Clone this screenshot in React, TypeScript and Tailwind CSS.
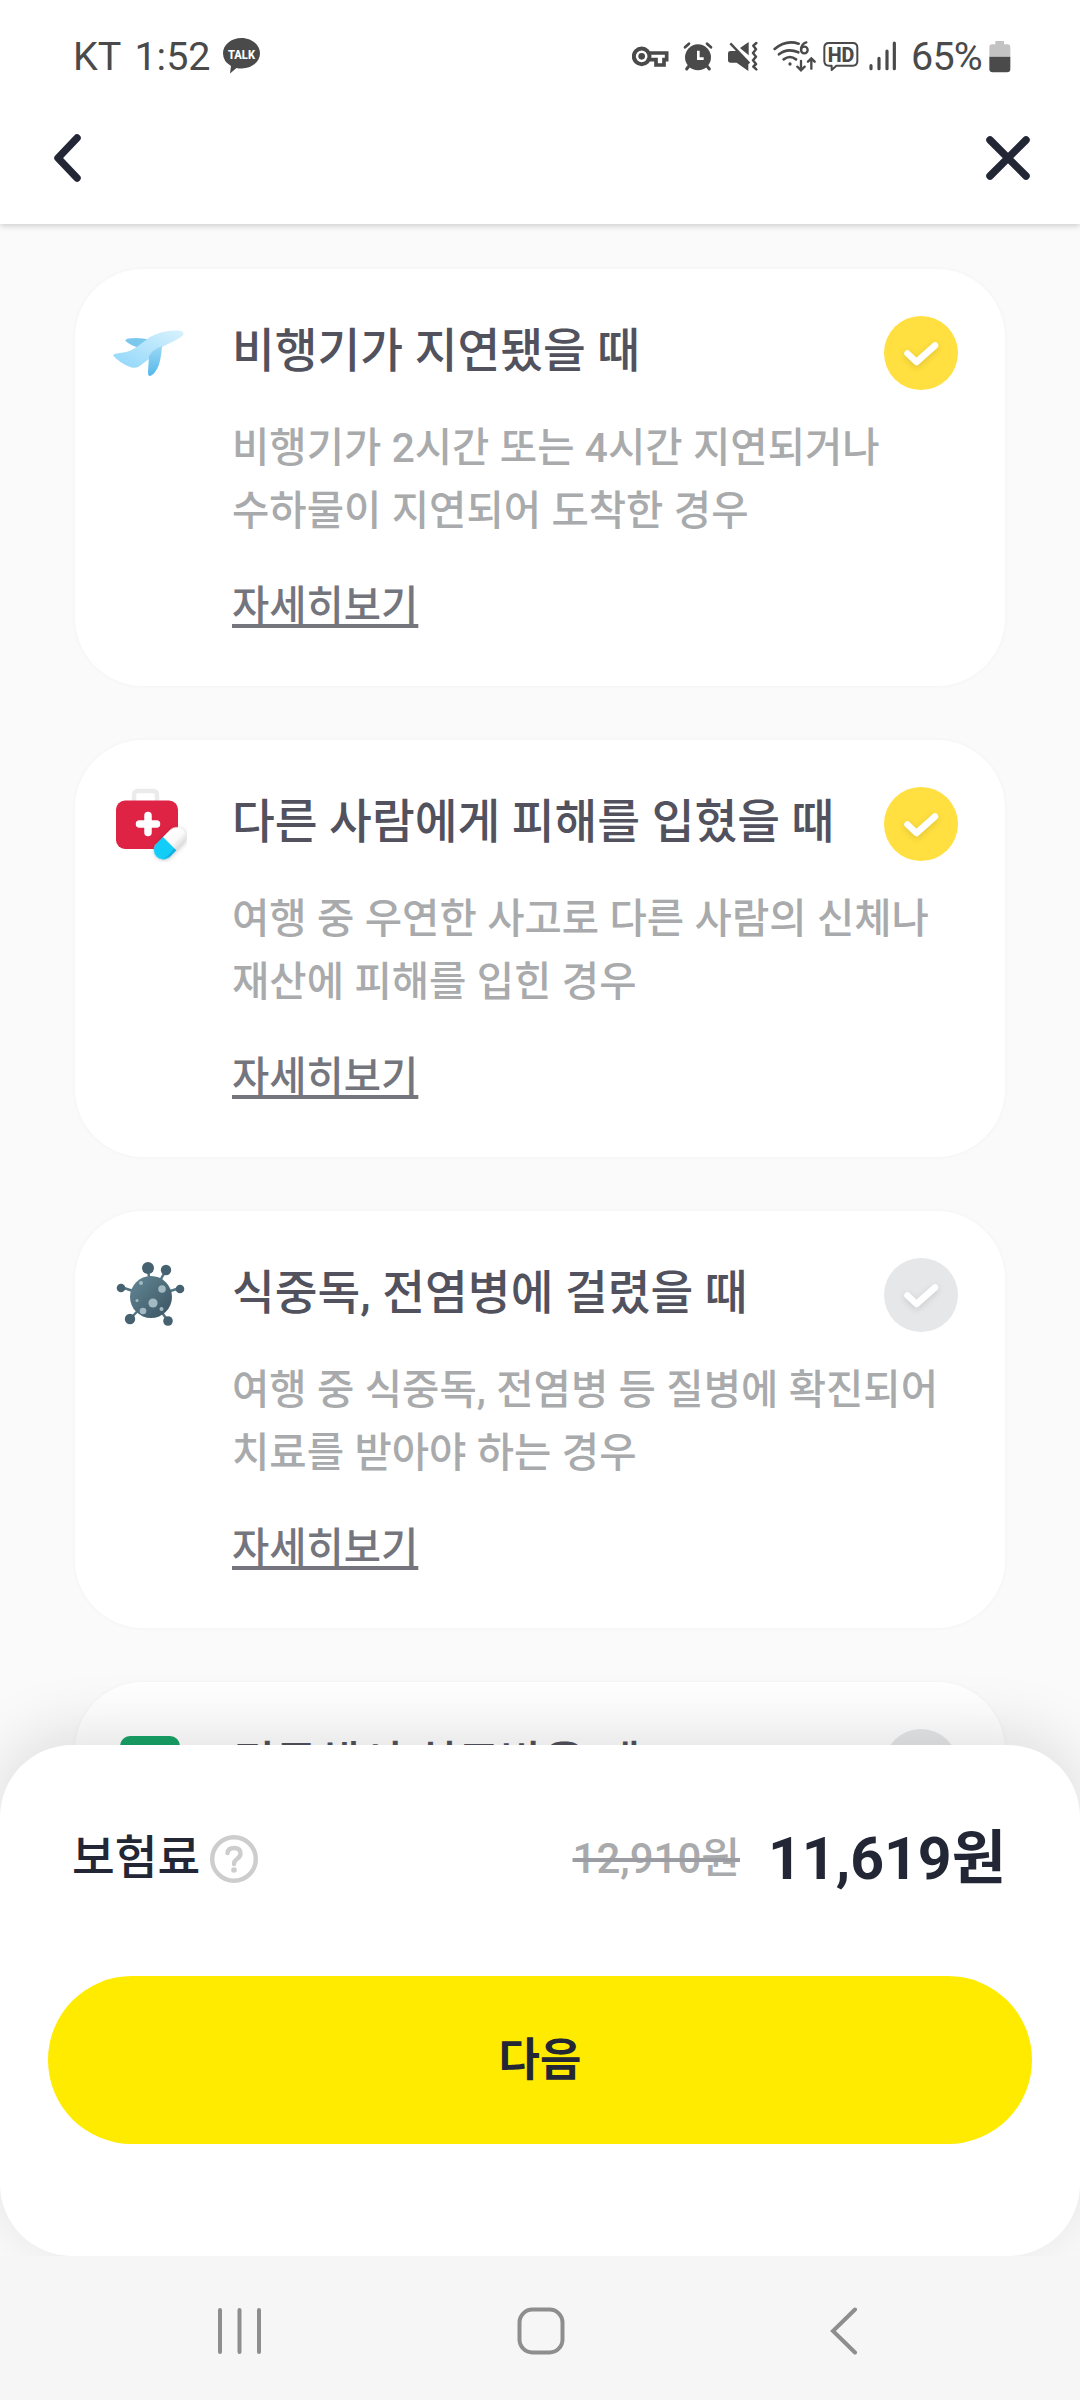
import type { ReactNode } from "react";

type Coverage = {
    id: number;
    icon: ReactNode;
    title: string;
    description: string[];
    checked: boolean;
}

const KeyIcon = () => (
    <svg width="37" height="32" viewBox="36 44 111 96" fill="none" stroke="#4a4a4a">
        <path d="M88 83H140V103H132V119H108V103H88" strokeWidth="11" />
        <circle cx="65" cy="93" r="23.500" strokeWidth="12" />
        <circle cx="65" cy="93" r="10" fill="#4a4a4a" stroke="none" />
    </svg>
)

const AlarmIcon = () => (
    <svg width="30" height="32" viewBox="188 44 90 96" fill="none" stroke="#4a4a4a" strokeLinecap="round">
        <circle cx="233" cy="96" r="39" fill="#4a4a4a" stroke="none" />
        <path d="M194 66L206 55M272 66L260 55" strokeWidth="8" />
        <path d="M206 122L199 131M260 122L267 131" strokeWidth="9" />
        <path d="M234 76V100H250" stroke="#fff" strokeWidth="8" strokeLinecap="butt" />
    </svg>
)

const MuteIcon = () => (
    <svg width="30" height="32" viewBox="324 44 90 96">
        <path d="M324 84Q324 77 331 77H352L385 108V137L350 112H332Q324 112 324 104Z" fill="#4a4a4a" />
        <path d="M360 68L386 50V90Z" fill="#4a4a4a" />
        <path d="M331 54L388 114" stroke="#4a4a4a" strokeWidth="7" />
        <path d="M409 53L400 61L408 72L399 83L408 94L399 105L408 116L400 124L409 132" fill="none" stroke="#4a4a4a" strokeWidth="7.500" strokeLinecap="round" strokeLinejoin="round" />
    </svg>
)

const WifiIcon = () => (
    <svg width="43" height="32" viewBox="457 44 129 96" fill="none" stroke="#4a4a4a" strokeWidth="8" strokeLinecap="round">
        <path d="M462 71Q496 42 534 55M475 87Q500 67 533 81M489 102Q508 88 526 102" />
        <circle cx="508" cy="116" r="5" fill="#4a4a4a" stroke="none" />
        <circle cx="551" cy="74" r="10" strokeWidth="7" />
        <path d="M557 51Q542 55 541 73" strokeWidth="7" />
        <path d="M541 107V134M530 124L541 135L552 124M572 130V100M562 109L572 99L582 109" strokeWidth="7" />
    </svg>
)

const HdIcon = () => (
    <svg width="36" height="32" viewBox="607 44 108 96">
        <path d="M625 53H696Q710 53 710 67V107Q710 121 696 121H647L633 134V121H625Q611 121 611 107V67Q611 53 625 53Z" fill="none" stroke="#4a4a4a" strokeWidth="6" strokeLinejoin="round" />
        <text x="661" y="109" textAnchor="middle" fontSize="62" fontWeight="800" fill="#4a4a4a" textLength="80" lengthAdjust="spacingAndGlyphs" fontFamily="Roboto, sans-serif">HD</text>
    </svg>
)

const SignalIcon = () => (
    <svg width="28" height="32" viewBox="746 44 84 96" stroke="#4a4a4a" strokeWidth="9.500" strokeLinecap="round">
        <path d="M752 121V130M776 99V130M800 77V130M822 53V130" />
    </svg>
)

const BatteryIcon = () => (
    <svg width="22" height="33" viewBox="1106 43 66 99">
        <path d="M1125 46H1151V56H1162Q1170 56 1170 66V93H1107V66Q1107 56 1115 56H1125Z" fill="#c3c3c3" />
        <path d="M1107 93H1170V130Q1170 140 1160 140H1117Q1107 140 1107 130Z" fill="#4a4a4a" />
    </svg>
)

const TalkIcon = () => (
    <svg width="37" height="36" viewBox="0 0 37 36">
        <path d="M18.500 0C28.700 0 37 6.800 37 15.300S28.700 30.500 18.500 30.500Q15.500 30.500 13.500 30L7 35.500L8 28Q0 23.500 0 15.300C0 6.800 8.300 0 18.500 0Z" fill="#4a4a4a" />
        <text x="18.500" y="20.500" textAnchor="middle" fontSize="13.500" fontWeight="800" fill="#fff" textLength="27" lengthAdjust="spacingAndGlyphs" fontFamily="Roboto, sans-serif">TALK</text>
    </svg>
)

const PlaneIcon = () => (
    <svg width="72" height="72" viewBox="0 0 72 72">
        <defs>
            <linearGradient id="plane-body" x1="1" y1="0" x2="0" y2="1">
                <stop offset="0" stopColor="#d8f2fd" />
                <stop offset="1" stopColor="#8fd6fa" />
            </linearGradient>
            <linearGradient id="plane-wing" x1="0" y1="0" x2="0" y2="1">
                <stop offset="0" stopColor="#9bd8f5" />
                <stop offset="1" stopColor="#55b8ea" />
            </linearGradient>
        </defs>
        <path d="M12.500 24Q12 22 16 21.500Q25 20 37 22.500L27 31Q18 29 12.500 24Z" fill="#7cc8ed" />
        <path d="M0.500 39Q0 36.500 4 36.500L13 35Q18 34 25 29L37 20Q50 12.500 65 13.500Q71.500 14 70.500 17Q69.500 20 61 24L48 30.500L36 42L26 49.500Q21 52 16 49.500Q7 46 0.500 39Z" fill="url(#plane-body)" />
        <path d="M49 29Q48 45 44 52Q40 59 36.500 59Q35 59 35 55L36 39Q39 33 49 29Z" fill="url(#plane-wing)" />
    </svg>
)

const MedkitIcon = () => (
    <svg width="74" height="74" viewBox="0 0 74 74">
        <defs>
            <linearGradient id="pill-cap" x1="0" y1="0" x2="0" y2="1">
                <stop offset="0" stopColor="#fff" />
                <stop offset="0.6" stopColor="#fafafa" />
                <stop offset="1" stopColor="#dcdcdc" />
            </linearGradient>
        </defs>
        <path d="M21 14V7Q21 3 25 3H40Q44 3 44 7V14" fill="none" stroke="#ebebeb" strokeWidth="4.500" />
        <rect x="3" y="12.500" width="62" height="48.500" rx="9" fill="#de2344" />
        <path d="M35 27.500V44.500M26.500 36H43.500" stroke="#fff" strokeWidth="7.500" strokeLinecap="round" />
        <g transform="rotate(-45 57 56)" className="drop-shadow-[0_1px_2px_rgba(0,0,0,0.2)]">
            <rect x="38.500" y="46" width="38" height="19" rx="9.500" fill="url(#pill-cap)" />
            <path d="M57 46H48A9.500 9.500 0 0 0 48 65H57Z" fill="#12cdf8" />
            <path d="M42 62Q48 63.500 57 62V65H48Q44.500 64.500 42 62Z" fill="#17aee0" />
        </g>
    </svg>
)

const VirusIcon = () => (
    <svg width="72" height="72" viewBox="0 0 72 72">
        <defs>
            <linearGradient id="virus-body" x1="0" y1="0" x2="1" y2="1">
                <stop offset="0" stopColor="#648896" />
                <stop offset="1" stopColor="#3a5361" />
            </linearGradient>
        </defs>
        <path d="M38 38L35 9M38 38L53 11M38 38L8 28M38 38L67 29M38 38L17 60M38 38L55 62" stroke="#527583" strokeWidth="2.500" />
        <circle cx="38" cy="38" r="21" fill="url(#virus-body)" />
        <g fill="#46616f">
            <circle cx="35" cy="9" r="6" />
            <circle cx="53" cy="11" r="5.200" />
            <circle cx="8" cy="29" r="4.300" />
            <circle cx="67" cy="30" r="4.300" />
            <circle cx="17" cy="60" r="5.200" />
            <circle cx="55" cy="62" r="4.800" />
        </g>
        <g fill="#a3bac3">
            <circle cx="49" cy="30" r="3.800" />
            <circle cx="40" cy="44" r="4.600" />
            <circle cx="30" cy="52" r="3.300" />
            <circle cx="28" cy="24" r="2" />
            <circle cx="24" cy="41.500" r="1.500" />
            <circle cx="48.500" cy="50" r="2" />
        </g>
    </svg>
)

const HospitalIcon = () => (
    <svg width="72" height="72" viewBox="0 0 72 72">
        <rect x="7" y="6" width="60" height="61" rx="10" fill="#18a368" />
        <path d="M37 22V50M23 36H51" stroke="#fff" strokeWidth="8" strokeLinecap="round" />
    </svg>
)

const coverages: Coverage[] = [
    {
        id: 1,
        icon: <PlaneIcon />,
        title: "비행기가 지연됐을 때",
        description: ["비행기가 2시간 또는 4시간 지연되거나", "수하물이 지연되어 도착한 경우"],
        checked: true,
    },
    {
        id: 2,
        icon: <MedkitIcon />,
        title: "다른 사람에게 피해를 입혔을 때",
        description: ["여행 중 우연한 사고로 다른 사람의 신체나", "재산에 피해를 입힌 경우"],
        checked: true,
    },
    {
        id: 3,
        icon: <VirusIcon />,
        title: "식중독, 전염병에 걸렸을 때",
        description: ["여행 중 식중독, 전염병 등 질병에 확진되어", "치료를 받아야 하는 경우"],
        checked: false,
    },
    {
        id: 4,
        icon: <HospitalIcon />,
        title: "귀국해서 치료받을 때",
        description: [],
        checked: false,
    },
];

const CheckBadge = ({ checked }: { checked: boolean }) => (
    <svg width="74" height="74" viewBox="0 0 74 74" className={checked ? "text-[#ffe040]" : "text-[#e6e7e9]"}>
        <circle cx="37" cy="37" r="37" fill="currentColor" />
        <path d="M23.500 37.500L32.500 46L51 29.500" fill="none" stroke="#fff" strokeWidth="6.500" strokeLinecap="round" strokeLinejoin="round" className="drop-shadow-[0_2px_3px_rgba(0,0,0,0.12)]" />
    </svg>
)

const CoverageCard = ({ coverage }: { coverage: Coverage }) => {
    const { icon, title, description, checked } = coverage;

    return (
        <li className="flex h-[417px] shrink-0 rounded-[68px] bg-white pl-[38px] pr-[47px] pt-[47px] shadow-[0_0_4px_rgba(0,0,0,0.04)]">
            <div className="w-[119px] shrink-0 pt-px">{icon}</div>
            <div className="min-w-0 flex-1 whitespace-nowrap">
                <div className="flex h-[74px] justify-between">
                    <h3 className="pt-0.5 text-[46.5px] leading-[66px] font-medium text-[#52525e]">{title}</h3>
                    <CheckBadge checked={checked} />
                </div>
                <p className="mt-[27px] text-[40.6px] leading-[63px] font-medium text-[#a9aaac] [word-spacing:0.3px]">
                    {description.map((line) => <span key={line} className="block">{line}</span>)}
                </p>
                <a className="mt-8 inline-block text-[40.5px] leading-[63px] font-medium text-[#75757d] underline decoration-[4px] underline-offset-[4px]">자세히보기</a>
            </div>
        </li>
    )
}

const StatusBar = () => (
    <div className="flex h-28 items-center justify-between pl-[73px] pr-[69px] text-[39.5px] text-[#4a4a4a]">
        <div className="flex items-center">
            <span className="w-[150px] pt-0.5 whitespace-nowrap [word-spacing:4px]">KT 1:52</span>
            <TalkIcon />
        </div>
        <div className="flex items-center">
            <KeyIcon />
            <div className="ml-3.5 flex"><AlarmIcon /></div>
            <div className="ml-[15px] flex"><MuteIcon /></div>
            <div className="ml-[15px] flex"><WifiIcon /></div>
            <div className="ml-[7px] flex"><HdIcon /></div>
            <div className="ml-2.5 flex"><SignalIcon /></div>
            <span className="ml-3.5 w-[78px] pt-0.5 tracking-[-0.8px] whitespace-nowrap">65%</span>
            <BatteryIcon />
        </div>
    </div>
)

const Header = () => (
    <header className="relative z-10 h-56 shrink-0 bg-white shadow-[0_2px_6px_rgba(0,0,0,0.18)]">
        <StatusBar />
        <div className="flex h-[91px] items-center justify-between pl-[53px] pr-[50px]">
            <svg width="28" height="50" viewBox="0 0 28 50" fill="none" stroke="#232735" strokeWidth="7.500" strokeLinecap="round" strokeLinejoin="round">
                <path d="M24 5L5 25L24 45" />
            </svg>
            <svg width="44" height="44" viewBox="0 0 44 44" fill="none" stroke="#232735" strokeWidth="7.500" strokeLinecap="round">
                <path d="M4 4L40 40M40 4L4 40" />
            </svg>
        </div>
    </header>
)

const PriceSheet = () => (
    <section className="absolute inset-x-0 bottom-0 h-[511px] rounded-[72px] bg-white px-12 pt-[74px] shadow-[0_-12px_64px_rgba(0,0,0,0.12)]">
        <div className="flex h-[80px] items-center justify-between pl-6 pr-[26px]">
            <div className="flex items-center gap-2.5">
                <span className="text-[46.5px] font-medium text-[#232735]">보험료</span>
                <svg width="48" height="48" viewBox="0 0 48 48" fill="none" stroke="#cdcdcd" strokeLinecap="round">
                    <circle cx="24" cy="24" r="21.800" strokeWidth="4.400" />
                    <path d="M17.500 18Q18 13 24 13Q30.500 13 30.500 18.500Q30.500 21.500 27 24Q24 26 24 29" strokeWidth="4.400" />
                    <circle cx="24" cy="35" r="2.800" fill="#cdcdcd" stroke="none" />
                </svg>
            </div>
            <div className="flex items-center">
                <s className="mr-7 text-[42px] leading-[80px] font-medium text-[#a9aaac] decoration-[#9c9ca3] decoration-[4px]">12,910원</s>
                <strong className="text-[59px] leading-[80px] font-bold text-[#232735]">11,619원</strong>
            </div>
        </div>
        <button className="mt-[77px] flex h-[168px] w-full items-center justify-center rounded-full bg-[#ffeb00] pt-px text-[45px] font-bold text-[#232735]">다음</button>
    </section>
)

const NavigationBar = () => (
    <nav className="flex h-36 shrink-0 items-center bg-[#f6f6f6] pt-1.5 pl-[217px]">
        <svg width="46" height="48" viewBox="0 0 46 48" stroke="#8e8e8e" strokeWidth="4" strokeLinecap="round">
            <path d="M3 3V45M22.500 3V45M42 3V45" />
        </svg>
        <svg width="48" height="48" viewBox="0 0 48 48" fill="none" stroke="#8e8e8e" strokeWidth="4" className="ml-[254px]">
            <rect x="2.500" y="2.500" width="43" height="43" rx="13" />
        </svg>
        <svg width="28" height="48" viewBox="0 0 28 48" fill="none" stroke="#8e8e8e" strokeWidth="4" strokeLinecap="round" className="ml-[265px]">
            <path d="M25 2.500L3 24L25 45.500" />
        </svg>
    </nav>
)

const App = () => {
    return (
        <div className="flex h-[2400px] w-[1080px] flex-col overflow-hidden bg-[#fafafa] font-[Roboto,'Noto_Sans_CJK_KR',sans-serif]">
            <Header />
            <main className="relative min-h-0 flex-1 overflow-hidden">
                <ul className="flex flex-col gap-[54px] px-[75px] pt-[45px]">
                    {coverages.map((coverage) => <CoverageCard key={coverage.id} coverage={coverage} />)}
                </ul>
                <PriceSheet />
            </main>
            <NavigationBar />
        </div>
    )
}

export default App;
